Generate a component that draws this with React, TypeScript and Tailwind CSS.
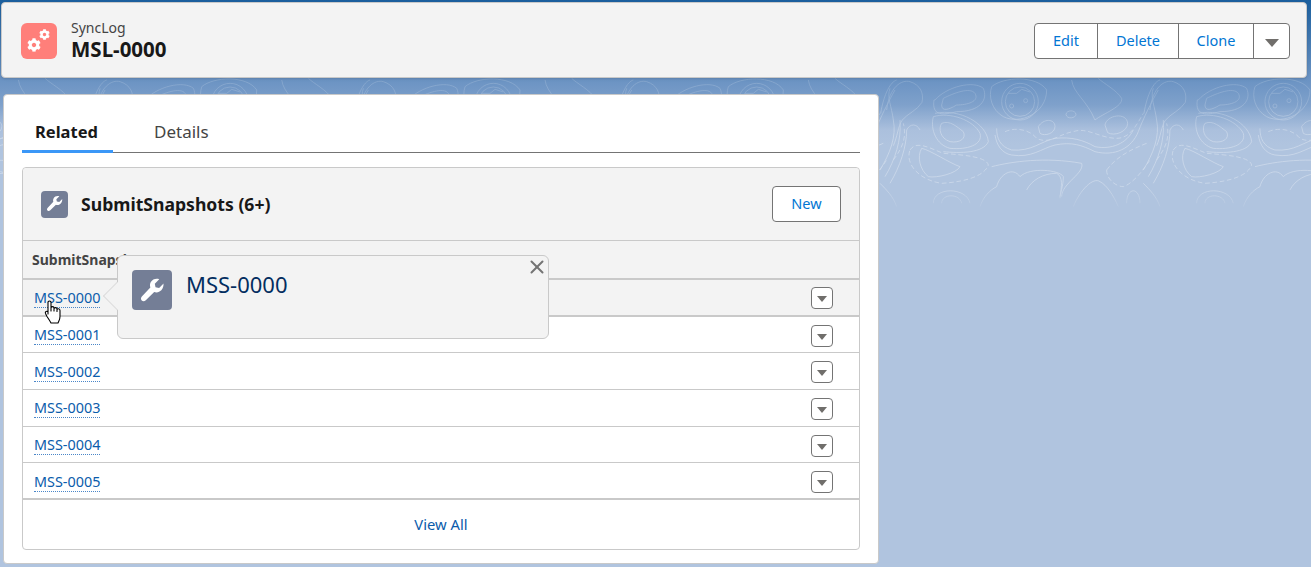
import React from 'react';
import { FaCog } from 'react-icons/fa';
import { X } from 'lucide-react';

const font = { fontFamily: '"Noto Sans", sans-serif' };

const rows = ['MSS-0000', 'MSS-0001', 'MSS-0002', 'MSS-0003', 'MSS-0004', 'MSS-0005'];

const Caret = ({ large }: { large?: boolean }) => (
  <svg
    width={large ? 14 : 10}
    height={large ? 8 : 6}
    viewBox="0 0 14 8"
    preserveAspectRatio="none"
    className={large ? 'translate-y-[2px]' : 'translate-y-px'}
  >
    <path d="M0 0h14L7 8z" fill="#706e6b" />
  </svg>
);

const WrenchIcon = ({ box }: { box: string }) => (
  <div className={`${box} flex-none rounded bg-[#747e96] flex items-center justify-center`}>
    <svg viewBox="0 0 24 24" className="w-[72%] h-[72%]" fill="#ffffff">
      <path d="M21.3 6.200l-3.700 3.700-3-.5-.6-3 3.700-3.700c-2.700-.9-5.700.1-7 2.400-.8 1.500-.9 3-.4 4.400L3.400 16.900c-1.100 1.100-1.200 2.500-.3 3.500.9.900 2.300.9 3.400-.2l7-6.800c1.400.5 3 .4 4.400-.4 2.400-1.300 3.500-4 3.400-6.800z" />
    </svg>
  </div>
);

// traced from the org background, tile repeats every 790 units (263px on the page)
const contourTile = (
  <>
    <path d="M80 120C88 50 125 28 150 35c32 10 42 36 36 62-14 24-44 34-60 54-12 18-14 50-26 76" />
    <path d="M62 130C72 70 92 35 110 30" />
    <path d="M250 85c30-15 80-35 95-15 15 25-25 35-55 35-25 15-45 20-45 0z" />
    <path d="M225 90c35-40 115-60 145-35 15 35-10 70-80 70-40 10-75 15-68-35z" />
    <circle cx="480" cy="95" r="55" />
    <circle cx="480" cy="95" r="44" />
    <path d="M395 50c35-30 135-35 165 10 0 70-80 105-130 80-35-20-45-60-35-90z" />
    <path d="M445 70l25 0 15-12 25 8" />
    <circle cx="455" cy="108" r="6" />
    <circle cx="497" cy="92" r="6" />
    <path d="M245 160c25-10 45 10 65 25 10 20-10 35-40 30-30-10-35-40-25-55z" />
    <path d="M220 140c50-15 120 10 140 50 10 35-40 50-90 45-40-10-60-55-50-95z" />
    <path d="M225 130c75-15 155 30 160 85-15 35-85 35-135 30" />
    <path d="M535 170c15-25 50-25 50 0 0 20-30 30-45 20z" />
    <path d="M618 133c2-14 28-14 30 0 0 12-28 16-30 0z" />
    <path d="M735 165c5-30 65-40 68-5 0 25-40 40-60 28z" />
    <path d="M635 30c5 40 45 60 70 120 25-20 85-40 80-65-15-25-55-45-70-60" />
    <path d="M435 185c35-15 75-5 95 20 40 20 70-15 110-20 40-15 80 20 130 20 40 0 60-40 80-75" strokeDasharray="14 8" />
    <path d="M405 195c5 30 20 55 50 60 60 10 90-20 130-30 50-10 80 0 120 20 60 15 110-10 130-60 15-40 40-90 60-125" />
    <path d="M410 175c0 30 10 55 45 65 60 5 85-25 130-35 50-5 85 5 120 25 50 10 95-10 115-50" />
    <path d="M60 300c30-50 50-100 40-150-5-40-20-70-10-95" />
    <path d="M75 320c30-50 50-110 45-170" />
    <path d="M90 340c30-50 50-110 50-160 10-20 30-20 40 0" />
    <path d="M100 270c30-40 40-70 30-110" strokeDasharray="14 8" />
    <path d="M185 235c25 5 85 45 115 55-10 20-70 35-95 30-25-20-35-60-20-85z" />
    <path d="M150 240c20-30 60-5 100 10 60 5 130 10 135 35-10 30-60 50-140 55-70-10-110-60-95-100z" strokeDasharray="14 8" />
    <path d="M410 350c10-40 50-60 70-30 30-30 120-20 130 0 0 30-10 50-10 65" />
    <path d="M395 290c60-15 160-30 270-10 10 30-60 60-60 100" />
    <path d="M500 360c15-30 50-50 90-50 20 10 15 40 10 70" />
    <path d="M740 300c30-40 70-60 120-80" strokeDasharray="14 8" />
    <path d="M740 300c0 30 30 50 50 50 30-10 60-50 80-80" strokeDasharray="14 8" />
    <path d="M220 400c0-50 100-50 110 0" />
    <path d="M245 400c0-30 55-30 60 0" />
    <path d="M640 410c20-50 60-90 80-75 20 10 40 40 55 75" />
    <path d="M800 400c0-50 40-50 40 0" />
    <path d="M60 340c20 20 40 40 50 70" />
    <path d="M360 410c10-30 30-50 50-60" />
  </>
);

const Contours = () => (
  <svg className="absolute left-0 top-0" width="1311" height="220" fill="none" stroke="#ffffff" strokeWidth="2.400">
    <defs>
      <linearGradient id="fade" x1="0" y1="0" x2="0" y2="220" gradientUnits="userSpaceOnUse">
        <stop offset="0.45" stopColor="#ffffff" stopOpacity="0.2" />
        <stop offset="0.62" stopColor="#ffffff" stopOpacity="0.38" />
        <stop offset="0.85" stopColor="#ffffff" stopOpacity="0.38" />
        <stop offset="0.97" stopColor="#ffffff" stopOpacity="0" />
      </linearGradient>
      <mask id="fadeMask" maskUnits="userSpaceOnUse" x="0" y="0" width="1311" height="220">
        <rect width="1311" height="220" fill="url(#fade)" stroke="none" />
      </mask>
    </defs>
    <g mask="url(#fadeMask)">
      {[-5, -4, -3, -2, -1, 0, 1].map(n => (
        <g key={n} transform={`translate(${860 + n * 263.3} 70) scale(0.3333)`}>{contourTile}</g>
      ))}
    </g>
  </svg>
);

const App: React.FC = () => {
  return (
    <div style={font} className="relative w-[1311px] h-[567px] overflow-hidden bg-[#b0c4df]">
      <div className="absolute inset-x-0 top-0 h-[145px] bg-[linear-gradient(180deg,#1b5f9e_0px,#6b93c3_80px,#7fa1cb_105px,#abc0dd_130px,#b0c4df_145px)]" />
      <Contours />

      <div className="relative flex flex-col pt-[2px] pl-[1px]">
        {/* Highlights panel */}
        <header className="w-[1306px] h-[76px] flex items-center justify-between pl-[19px] pr-[16px] pt-[2px] bg-[#f3f3f3] border border-[#c9c9c9] rounded shadow-sm">
          <div className="flex items-center gap-[14px]">
            <div className="relative w-9 h-9 rounded-md bg-[#ff7f7a] flex-none">
              <FaCog className="absolute left-[6px] top-[15px] w-[14px] h-[14px] text-white" />
              <FaCog className="absolute left-[18px] top-[6px] w-[11px] h-[11px] text-white" />
            </div>
            <div className="flex flex-col -translate-y-px">
              <span className="text-[14px] leading-[18px] text-[#444444]">SyncLog</span>
              <span className="text-[20.500px] leading-[24px] font-bold text-[#181818]">MSL-0000</span>
            </div>
          </div>
          <div className="flex h-9 bg-white border border-[#747474] rounded text-[14.500px] text-[#0176d3]">
            <button className="w-[62px]">Edit</button>
            <button className="w-[81px] border-l border-[#747474]">Delete</button>
            <button className="w-[75px] border-l border-[#747474]">Clone</button>
            <button className="w-[36px] border-l border-[#747474] flex items-center justify-center"><Caret large /></button>
          </div>
        </header>

        {/* Related card */}
        <main className="mt-[16px] ml-[2px] w-[876px] h-[470px] bg-white border border-[#c9c9c9] rounded pl-[18px] pr-[18px] pt-[18px]">
          <div className="flex h-[40px] border-b border-[#747474]">
            <div className="w-[91px] h-[40px] pl-[13px] flex items-center text-[16.500px] font-bold text-[#181818] border-b-[3px] border-[#3b97f7] pt-[1px]">Related</div>
            <div className="pl-[41px] pb-[2px] flex items-center text-[17px] text-[#444444]">Details</div>
          </div>

          <section className="relative mt-[14px] h-[383px] border border-[#c9c9c9] rounded flex flex-col">
            <div className="h-[72px] flex-none flex items-center justify-between pl-[18px] pr-[18px] bg-[#f3f3f3] rounded-t">
              <div className="flex items-center gap-[13px]">
                <WrenchIcon box="w-[27px] h-[27px]" />
                <span className="text-[17.600px] font-bold text-[#181818]">SubmitSnapshots (6+)</span>
              </div>
              <button className="w-[69px] h-9 bg-white border border-[#747474] rounded text-[14.500px] text-[#0176d3]">New</button>
            </div>
            <div className="h-[40px] flex-none flex items-center pl-[9px] bg-[#f3f3f3] border-t border-b-2 border-[#c9c9c9] text-[14px] font-bold text-[#444444]">SubmitSnapshot Name</div>
            {rows.map((name, i) => (
              <div key={name} className={`h-[36.700px] flex-none flex items-center justify-between pl-[11px] pr-[26px] border-[#c9c9c9] ${i === 5 ? 'pt-[3px]' : 'pt-[2px]'} ${i === 0 || i === 5 ? 'border-b-2' : 'border-b'} ${i === 0 ? 'bg-[#f3f3f3]' : 'bg-white'}`}>
                <a className="text-[14.400px] text-[#0b5cab] border-b border-dotted border-[#4a86c8] leading-[18px]">{name}</a>
                <button className="w-[22px] h-[22px] bg-white border border-[#747474] rounded flex items-center justify-center"><Caret /></button>
              </div>
            ))}
            <div className="flex-1 flex items-center justify-center text-[14.800px] text-[#0b5cab]">View All</div>

            {/* Hover popover */}
            <div className="absolute left-[94px] top-[87px] w-[432px] h-[84px] bg-[#f3f3f3] border border-[#c9c9c9] rounded-md">
              <div className="absolute left-[-11px] top-[30px] w-5 h-5 rotate-45 bg-[#f3f3f3] border-l border-b border-[#dcdcdc]" />
              <X className="absolute right-0 top-0 w-[22px] h-[22px] text-[#747474]" strokeWidth={2.2} />
              <div className="relative flex gap-[14px] pl-[14px] pt-[14px]">
                <WrenchIcon box="w-10 h-10" />
                <span className="text-[22px] leading-[28px] text-[#032d60]">MSS-0000</span>
              </div>
            </div>
          </section>
        </main>
      </div>

      {/* Mouse pointer */}
      <svg className="absolute left-[44px] top-[300px]" width="20" height="26" viewBox="0 0 20 26" fill="#fff" stroke="#000" strokeWidth="1.100" strokeLinejoin="round">
        <path d="M4 2.500c0-2 3-2 3 0v8.500l0-3c0-1.800 3-1.800 3 0v3-2c0-1.800 3-1.800 3 0v2.500-1.500c0-1.800 3-1.500 3 .5v6c0 3-1 4-2 6.500H7c-1-2-2-3.500-4-6.500l-1.500-3c-.8-1.800 1.500-3 2.500-1.500L4 14z" />
      </svg>
    </div>
  );
};

export default App;
